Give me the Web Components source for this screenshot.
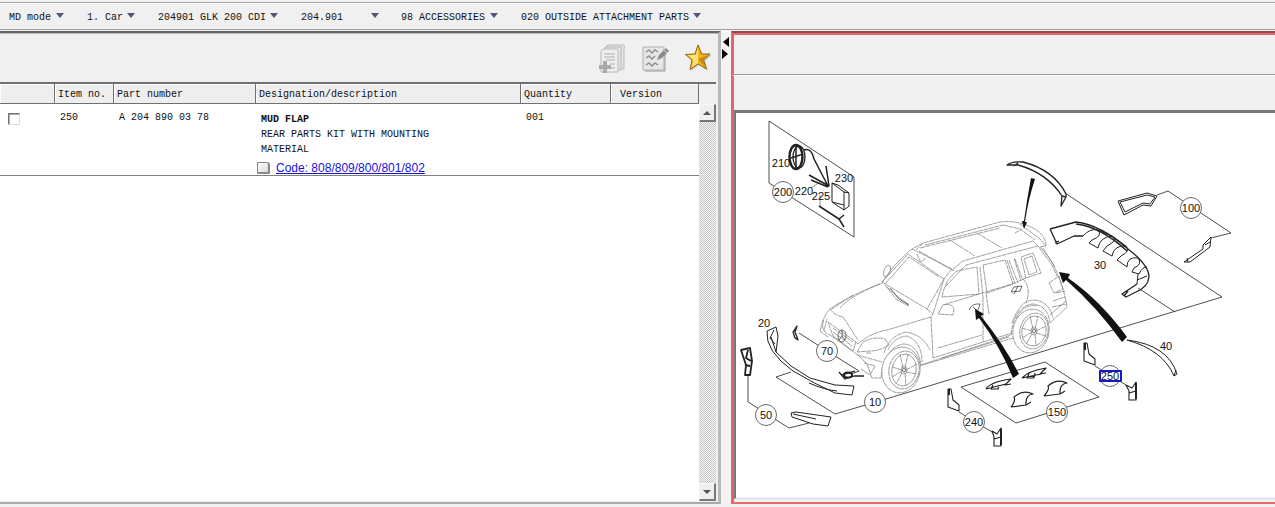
<!DOCTYPE html>
<html lang="en">
<head>
<meta charset="utf-8">
<title>Parts catalogue</title>
<style>
html,body{margin:0;height:100%}
body{background:#f0f0f0;color:#111;font:10px/15px "Liberation Mono","Noto Sans CJK SC",monospace}
</style>
</head>
<body>
<parts-app></parts-app>

<template id="t-app">
<style>
:host{display:grid;grid-template-rows:auto 1fr;height:100vh;box-sizing:border-box;padding-bottom:3px}
nav{display:flex;margin-top:2px;align-items:center;padding:2px 0 0 9px;border-top:1px solid #a4a4a4;border-bottom:1px solid #a0a0a0;box-shadow:inset 0 1px #fff;box-sizing:border-box;height:28px}
.work{display:grid;grid-template-columns:721fr 10px 544fr;margin-top:1px;min-height:0}
</style>
<nav aria-label="Catalogue path">
<path-picker label="Mode" value="MD mode" style="width:78px;--w:55px"></path-picker>
<path-picker label="Class" value="1. Car" style="width:71px;--w:48px"></path-picker>
<path-picker label="Model" value="204901 GLK 200 CDI" style="width:143px;--w:120px"></path-picker>
<path-picker label="Series" value="204.901" style="width:100px;--w:78px"></path-picker>
<path-picker label="Group" value="98 ACCESSORIES" style="width:120px;--w:97px"></path-picker>
<path-picker label="Subgroup" value="020 OUTSIDE ATTACHMENT PARTS" style="width:200px;--w:180px"></path-picker>
</nav>
<div class="work">
<parts-panel></parts-panel>
<split-bar></split-bar>
<image-panel><parts-diagram></parts-diagram></image-panel>
</div>
</template>

<template id="t-picker">
<style>
:host{display:block;flex:none}
div{display:grid;width:var(--w);align-items:center}
select,i{grid-area:1/1}
select{appearance:none;border:0;margin:0;padding:0 9px 0 0;background:none;color:inherit;font:inherit;height:16px;width:100%}
i{justify-self:end;align-self:start;margin-top:4px;border:4px solid transparent;border-top:5px solid #55557c;border-bottom:0;pointer-events:none}
</style>
<div><select><option></option></select><i></i></div>
</template>

<template id="t-split">
<style>
:host{display:flex;flex-direction:column;gap:2px;padding:5px 0 0 1px;background:#f3f3f3;border-top:1px solid #fff}
button{border:0;padding:0;background:none;display:block;width:7px;height:10px}
svg{display:block}
</style>
<button aria-label="Collapse left"><svg width="7" height="10"><path d="M7 0V10L1 5Z"/></svg></button>
<button aria-label="Collapse right"><svg width="7" height="10"><path d="M0 0V10L6 5Z"/></svg></button>
</template>

<template id="t-parts">
<style>
:host{display:grid;grid-template-rows:49px 1fr;min-height:0;min-width:0;background:#f0f0f0;border-top:2px solid #666;border-right:3px solid #b9b9b9;border-bottom:2px solid #aaa;box-shadow:inset 0 1px #bbb}
.tools{display:flex;justify-content:flex-end;align-items:center;gap:13px;padding-right:5px}
.tools button{border:0;padding:0;background:none;width:30px;height:30px}
.tools svg{display:block}
.body{display:grid;grid-template-columns:1fr 17px;min-height:0;border-top:2px solid #707070;margin:0 2px 1px 0}
.list{background:#fff;min-width:0}
table{width:100%;border-collapse:separate;border-spacing:0;table-layout:fixed}
th{height:17px;padding:2px 0 0 3px;text-align:left;font-weight:400;line-height:17px;background:#eee;border-right:1px solid #707070;border-bottom:1px solid #707070;box-shadow:inset 1px 1px #fff}
th:last-child{padding-left:9px}
td{vertical-align:top;padding:6px 0 0 5px;border-bottom:1px solid #808080}
td:first-child{padding:9px 0 0 8px}
td.d{padding:8px 0 0 5px}
td.d p{margin:0}
input{appearance:none;display:block;margin:0;width:12px;height:12px;border:1px solid #ddd;border-top-color:#777;border-left-color:#777;box-shadow:inset 1px 1px #aaa}
.code{display:flex;align-items:center;gap:6px;height:14px;margin:4px 0 0 -4px;font:12px/14px "Liberation Sans",sans-serif}
a{color:#1414dc}
.page{width:10px;height:9px;border:1px solid #888;border-width:1px 2px 2px 1px;border-radius:1px 3px 1px 1px;background:linear-gradient(135deg,#fff,#d8d8e0)}
.scroll{display:flex;flex-direction:column;justify-content:space-between;margin-top:20px;background:repeating-conic-gradient(#c6c6c6 0 25%,#f6f6f6 0 50%) 0 0/2px 2px}
.scroll button{width:17px;height:18px;padding:0;border:1px solid #f8f8f8;border-right:2px solid #777;border-bottom:2px solid #777;background:#efefef;display:grid;place-items:center}
</style>
<div class="tools">
<button aria-label="Add to list"><svg width="30" height="30" viewBox="0 0 30 30"><g stroke="#b8b8b8" fill="#e3e3e3"><path d="M9 5Q9 2 12 2H27Q28 4 27 6V26H9Z"/><path d="M7 7Q7 4 10 4H24Q25 6 24 9V27H7Z"/><path d="M4 9Q4 6 7 6H20Q22 7 21 10V29H4Z" fill="#eee"/></g><path d="M7 11H18M7 14H18M9 17H18M13 21H18M13 25H18" stroke="#b0b0b0"/><path d="M6 18h4v4h4v4h-4v4H6v-4H2v-4h4Z" fill="#aaa"/></svg></button>
<button aria-label="Edit note"><svg width="30" height="30" viewBox="0 0 30 30"><path d="M3 4H24V27H3Z" fill="#e6e6e6" stroke="#b2b2b2"/><path d="M5 28H25V7" fill="none" stroke="#999"/><path d="M6 9l3-2 3 3 3-3 3 2M6 15l3-2 3 3 3-3M6 22l3-2 3 3 3-3 3 2" fill="none" stroke="#8d8d8d" stroke-width="1.4"/><path d="M17 17l2-5 7-7 3 3-7 7Z" fill="#8b8b8b"/><path d="M24 7l3 3" stroke="#ddd"/></svg></button>
<button aria-label="Favourites"><svg width="30" height="30" viewBox="0 0 30 30"><path d="M16 3L20 12L29 12L22 18L25 28L16 22L8 28L10 18L4 13L13 12Z" fill="#999" opacity=".45"/><path d="M15 2L18.500 11L27 11L20.500 17L23.500 26L15 21L7 26.500L9 17L2.500 11.500L12 11Z" fill="#f3b51c" stroke="#8f6512"/><path d="M15 4V20L8.500 24.500L10.500 17L4.500 12L13 12Z" fill="#ffe274"/><path d="M15 16L25 12L20 17L22 24Z" fill="#c98813"/></svg></button>
</div>
<div class="body">
<div class="list"><table>
<colgroup><col style="width:55px"><col style="width:59px"><col style="width:142px"><col><col style="width:90px"><col style="width:88px"></colgroup>
<thead><tr><th aria-label="Select"></th><th>Item no.</th><th>Part number</th><th>Designation/description</th><th>Quantity</th><th>Version</th></tr></thead>
<tbody><tr><td><input type="checkbox" aria-label="Select item 250"></td><td>250</td><td>A 204 890 03 78</td><td class="d"><b>MUD FLAP</b><p>REAR PARTS KIT WITH MOUNTING<br>MATERIAL</p><div class="code"><span class="page"></span><a href="#codes">Code: 808/809/800/801/802</a></div></td><td>001</td><td></td></tr></tbody>
</table></div>
<div class="scroll"><button aria-label="Scroll up"><svg width="8" height="4"><path d="M0 4H8L4 0Z" fill="#555"/></svg></button><button aria-label="Scroll down"><svg width="8" height="4"><path d="M0 0H8L4 4Z" fill="#555"/></svg></button></div>
</div>
</template>

<template id="t-image">
<style>
:host{display:grid;grid-template-rows:41px 1px 35px 1fr;min-height:0;min-width:0;border-top:2px solid #904c4c;border-left:2px solid #e26666;border-bottom:2px solid #e66c69;box-shadow:inset 1px 2px #e26666}
hr{margin:0;border:0;background:#999;box-shadow:0 1px #fff}
.view{margin:0 0 3px 1px;background:#fff;border-top:3px solid #777;border-left:2px solid #777;border-bottom:1px solid #d8d8e4;overflow:hidden}
</style>
<div></div><hr><div></div><div class="view"><slot></slot></div>
</template>

<template id="t-diagram">
<style>
:host{display:block}
svg{display:block;width:100%;height:auto;fill:none;stroke:#222;stroke-width:.8;stroke-linejoin:round}
text{font:11px "Liberation Sans",sans-serif;fill:#111;stroke:none;text-anchor:middle}
.n circle{fill:#fff;stroke:#444}
.car{stroke:#777;stroke-width:.7;stroke-dasharray:5 .5}
.w{fill:#fff}
.k{fill:#111}
.p{stroke-width:1.3}
</style>
<svg viewBox="736 113 539 385" role="img" aria-label="Exploded view of outside attachment parts">
<path d="M769 121L854 177V237L769 183Z"/>
<path d="M1065 193L1222 297L886 399M1138 288L1175 312M1157 195L1168 191L1231 233L1211 238M799 333L827 351L859 371L851 374M791 372L776 377L835 414L886 399M748 376V402L789 428L809 423M961 387L1045 362L1099 397L1016 423ZM959 412L992 432M1095 366L1126 385"/>
<g class="car">
<path class="w" d="M823 322Q825 311 836 305Q854 294 882 283Q895 262 912 249L923 243L1000 222Q1018 220 1033 228Q1046 235 1046 246L1040 247Q1054 262 1058 276Q1065 292 1067 307L1050 323Q1048 305 1032 304Q1014 307 1011 335L921 365Q918 344 903 344Q884 348 881 378L872 378L867 364L858 355L830 335Q821 332 823 322Z"/>
<path d="M882 282L908 254L944 279L927 309ZM885 284L909 257L939 277M912 249L952 269L944 279L933 314M919 251L954 271M923 243L916 250M925 245L1003 225M920 248L1000 228M950 240L975 256M977 233L1002 248M952 270L963 261L1033 241L1038 246L966 265L945 287M1003 225L1020 229L1035 240M1020 224L1040 239L1046 246M1038 246L1052 265L1057 276M1043 248L1055 267"/>
<path d="M942 297Q945 280 957 271L977 267L979 294ZM980 267L983 297M983 265L1005 260L1013 284L987 293ZM1007 260L1015 284M1014 258L1021 281M1021 257L1033 253L1041 273L1026 278ZM1024 259L1032 256L1037 272L1029 275ZM1009 260L1018 283M1026 278L1012 284L943 305M1015 259L1022 278Q1032 287 1026 303M983 297V342M986 293L989 314M931 317L933 358L983 342L1012 333M919 366L1013 338M938 348L982 335M942 358L1009 337"/>
<path d="M927 309L933 314L931 317L887 330Q870 333 858 344L855 341M830 308Q833 315 843 317L858 340M853 295L832 309M828 322L856 342L853 351L833 336ZM833 328L853 342M833 332L852 346M880 284Q850 296 840 308M857 352L863 342Q874 336 885 339L889 345Q880 351 870 351ZM866 353H871M857 355L882 362M864 363L875 366L870 375L861 369M884 353Q889 336 906 332Q923 335 930 350M888 350Q894 337 907 336Q922 342 922 362M823 320L820 331L828 337M827 319L824 331M1012 323Q1020 300 1034 300Q1049 301 1053 318M1016 319Q1024 303 1037 306M1049 283L1059 276L1063 289L1054 293ZM1056 293L1065 291M1050 315L1066 301M1053 301L1065 297M1052 307L1066 304"/>
<ellipse cx="887" cy="271" rx="3" ry="6" transform="rotate(20 887 271)"/><path class="w" d="M938 314L943 305Q951 303 954 308L953 315ZM917 254L920 261Q924 262 925 258M885 285L897 300L909 306M887 287L897 296L908 304M1015 233L1022 229"/>
<g><ellipse class="w" cx="901" cy="370" rx="19" ry="23" transform="rotate(12 901 370)"/><ellipse cx="904" cy="370" rx="15" ry="19" transform="rotate(12 904 370)"/><ellipse cx="904" cy="370" rx="12" ry="16" transform="rotate(12 904 370)"/><path d="M903 368L900 354M905 368L908 354M906 370L917 364M906 372L917 374M905 373L906 386M902 373L896 384M902 370L892 367M902 371L892 377"/><ellipse cx="904" cy="370" rx="3" ry="4"/></g>
<g><ellipse class="w" cx="1031" cy="331" rx="18" ry="22" transform="rotate(12 1031 331)"/><ellipse cx="1034" cy="331" rx="14" ry="18" transform="rotate(12 1034 331)"/><ellipse cx="1034" cy="331" rx="12" ry="15" transform="rotate(12 1034 331)"/><path d="M1033 329L1030 316M1035 329L1038 316M1036 331L1046 326M1036 333L1046 336M1035 334L1036 346M1032 334L1026 344M1032 331L1022 328M1032 332L1022 338"/><ellipse cx="1034" cy="331" rx="3" ry="4"/></g>
</g>
<g stroke="#444"><ellipse cx="842" cy="336" rx="4" ry="6"/><path d="M842 330V336L839 340M842 336L845 340M969 310Q972 303 980 304L978 310M973 307L979 312M1011 292L1014 287L1022 286L1020 291ZM1014 294L1018 286M890 288L899 299L909 305"/><ellipse cx="904" cy="370" rx="1.500" ry="2"/><ellipse cx="1034" cy="331" rx="1.500" ry="2"/></g>
<g class="k" stroke="none"><path d="M1031 178L1035 179Q1028 200 1025 222L1027 222L1024 229L1022 221L1024 221Q1027 199 1031 178Z"/><path d="M975 309L984 314L981 316Q1005 346 1019 374L1013 378Q1000 346 979 318L976 320Z"/><path d="M1059 272L1070 274L1068 278Q1100 300 1127 337L1122 342Q1096 306 1066 280L1063 283Z"/></g>
<g class="p">
<ellipse cx="796" cy="157" rx="6.500" ry="12" stroke-width="2.500"/><ellipse cx="799" cy="157" rx="6" ry="11"/><path d="M791 158L803 154M796 146V169M804 150Q811 147 814 159L828 186M826 166L829 186L809 175M811 180L828 187M819 206L839 219L844 215M839 219L844 227" stroke-width="1.500"/><path d="M832 183L844 192V210L832 202ZM832 183L838 185L849 193V206L844 210M844 192L849 193M832 202L844 205" stroke-width="1"/><path d="M820 182L811 188M820 195V207" stroke-width=".5"/>
<path d="M1007 165Q1012 161 1023 162Q1054 170 1066 194L1066 197L1061 206L1062 196Q1047 173 1018 165ZM1018 163L1014 166M1062 196L1066 197"/>
<path d="M1118 201L1147 193L1157 196L1151 206L1143 205L1124 215ZM1120 202L1125 212L1143 203L1150 204L1155 197L1147 195Z" stroke-width="1"/>
<path d="M1050 229L1076 222Q1101 225 1128 249Q1149 265 1149 277Q1148 287 1136 292L1126 297L1122 294L1137 284M1050 229L1057 244L1074 236L1083 236M1076 224Q1101 227 1127 251M1055 243L1059 241M1124 296L1128 291"/><path d="M1083 236Q1090 228 1098 230Q1103 236 1092 240L1089 243L1098 248Q1100 237 1112 236Q1119 240 1107 246L1103 251L1112 256Q1114 245 1126 246Q1131 251 1121 256L1117 260L1127 267Q1127 256 1138 258Q1143 264 1134 268L1132 272L1139 274Q1143 266 1147 267M1137 280L1147 276M1138 274L1137 284M1098 230L1112 236M1112 236L1126 246" stroke-width="1"/>
<path d="M1211 237L1203 245V249L1184 262L1190 262L1210 247ZM1205 245L1210 242M1187 258L1188 262" stroke-width="1"/>
<path d="M767 331L776 327L778 336L776 352L771 337M767 331Q765 351 793 371Q815 384 835 393L852 395L854 386L835 385L810 378L791 366L776 352M774 330L770 338L775 344M809 383Q825 390 837 391" stroke-width="1"/><path d="M797 326L793 332L795 338L798 340L795 332Z"/>
<path d="M741 350L750 348L752 361L750 375L745 375L746 365ZM748 350L746 358L751 361M745 365L750 366" stroke-width="1.800"/><path d="M791 413L796 412L831 417L828 426L813 424L792 417ZM793 414L816 419" stroke-width="1"/>
<ellipse cx="848" cy="375" rx="4" ry="2.500" stroke-width="2"/><path d="M839 372L845 379L854 376H864M841 375L855 371"/>
<path d="M948 389H951L953 400L959 405V411L948 407ZM992 431L997 434L1001 428V446H994V437ZM994 439L1001 437M1084 343H1087L1089 354L1095 359V365L1084 361ZM1126 385L1132 388L1136 382V400H1129V391ZM1129 393L1136 391" stroke-width="1.100"/><path d="M949 389V395M1085 343V350M1001 429V445M1136 383V399" stroke-width="2"/>
<path d="M1127 340Q1168 345 1177 374L1174 376Q1163 350 1127 340ZM1174 376L1176 370" stroke-width="1"/>
<path d="M986 389Q990 382 1011 379L1005 385L1011 384M986 389L1006 384M993 385L991 389L998 389L999 385M1022 378Q1028 371 1046 368L1040 374L1046 373M1022 378L1041 374M1029 374L1027 378L1034 378L1035 373M1011 407Q1016 401 1014 397Q1023 389 1033 394Q1025 395 1026 405L1031 402M1011 407L1026 405M1044 396Q1050 389 1048 386Q1057 378 1067 383Q1059 384 1060 394L1065 391M1044 396L1060 394" stroke-width="1.200"/>
</g>
<g class="n"><circle cx="783" cy="192" r="10.500"/><circle cx="827" cy="351" r="10.500"/><circle cx="875" cy="402" r="10.500"/><circle cx="766" cy="415" r="10.500"/><circle cx="1191" cy="208" r="10.500"/><circle cx="1057" cy="412" r="10.500"/><circle cx="974" cy="422" r="10.500"/><circle cx="1110" cy="376" r="10.500"/></g>
<rect x="1100" y="371" width="21" height="10" stroke="#1616c4" stroke-width="2" fill="#fff"/>
<text x="783" y="196">200</text><text x="827" y="355">70</text><text x="875" y="406">10</text><text x="766" y="419">50</text><text x="1191" y="212">100</text><text x="1057" y="416">150</text><text x="974" y="426">240</text><text x="1110" y="380">250</text><text x="781" y="167">210</text><text x="844" y="182">230</text><text x="804" y="195">220</text><text x="821" y="200">225</text><text x="764" y="327">20</text><text x="1100" y="269">30</text><text x="1166" y="350">40</text>
</svg>
</template>

<script>
function define(name, id, setup) {
  customElements.define(name, class extends HTMLElement {
    constructor() {
      super();
      this.attachShadow({mode: 'open'}).append(document.getElementById(id).content.cloneNode(true));
    }
    connectedCallback() { if (setup) setup(this); }
  });
}
define('path-picker', 't-picker', el => {
  const select = el.shadowRoot.querySelector('select');
  select.setAttribute('aria-label', el.getAttribute('label'));
  select.options[0].textContent = el.getAttribute('value');
});
define('split-bar', 't-split');
define('parts-panel', 't-parts');
define('parts-diagram', 't-diagram');
define('image-panel', 't-image');
define('parts-app', 't-app');
</script>
</body>
</html>
